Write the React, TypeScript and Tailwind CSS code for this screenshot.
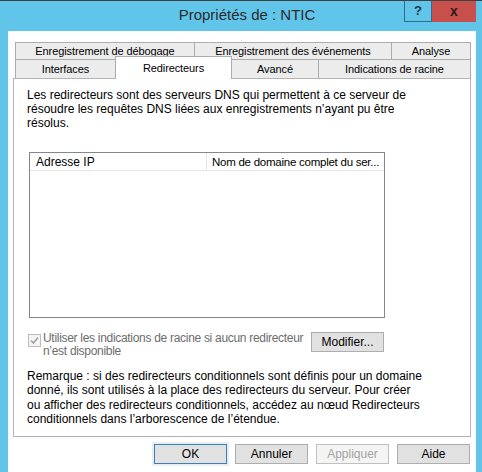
import React from 'react';

const topTabs = [
  { label: 'Enregistrement de débogage', w: 'w-[180px]' },
  { label: 'Enregistrement des événements', w: 'w-[198px]' },
  { label: 'Analyse', w: 'w-[80px]' },
];

function Button({ label, isDefault, disabled }: { label: string; isDefault?: boolean; disabled?: boolean }) {
  const look = disabled
    ? 'border-[#bfbfbf] bg-[#f4f4f4] text-[#a3a3a3]'
    : isDefault
      ? 'border-[#3c7fb1] bg-[#e1e1e1] text-black shadow-[0_0_0_2px_#e3eef6]'
      : 'border-[#adadad] bg-[#e1e1e1] text-black';
  return (
    <div className={`flex h-[20px] w-[73px] shrink-0 items-center justify-center border text-[12px] ${look}`}>
      {label}
    </div>
  );
}

export default function App() {
  return (
    <div className="flex h-[472px] w-[482px] flex-col overflow-hidden bg-[#60c5e8] font-['Liberation_Sans',Arial,sans-serif] text-black">
      {/* caption */}
      <div className="relative h-[31px] shrink-0 border-t border-[#3f3f3f]">
        <div className="flex h-full items-center justify-center pl-[12px] pb-[1px] text-[15px] text-[#2b2b2b]">
          Propriétés de : NTIC
        </div>
        <div className="absolute right-[6px] top-0 flex h-[21px]">
          <div className="flex w-[28px] items-center justify-center border-x border-b border-[#2e6d8e] text-[13px] font-bold text-[#1a3a4f]">
            ?
          </div>
          <div className="flex w-[44px] items-center justify-center bg-[#c7504c] text-[14px] font-bold text-[#2a1a1a]">
            x
          </div>
        </div>
      </div>

      {/* client area */}
      <div className="ml-[8px] mr-[6px] flex-1 bg-white px-[5px] pt-[11px]">
        <div className="whitespace-nowrap pl-[2px] text-[11px] tracking-[-0.1px]">
          <div className="flex h-[17px]">
            {topTabs.map((t, i) => (
              <div
                key={t.label}
                className={`${t.w} ${i > 0 ? '-ml-px' : ''} flex items-center justify-center border-x border-t border-[#acacac] bg-[#ececec]`}
              >
                {t.label}
              </div>
            ))}
          </div>
          <div className="flex h-[19px]">
            <div className="flex w-[101px] items-center justify-center border-x border-t border-[#acacac] bg-[#ececec]">
              Interfaces
            </div>
            <div className="relative z-10 -ml-px -mt-[3px] flex h-[23px] w-[117px] items-start justify-center border-x border-t border-[#acacac] bg-white pt-[3px]">
              Redirecteurs
            </div>
            <div className="-ml-px flex w-[88px] items-center justify-center border-x border-t border-[#acacac] bg-[#ececec]">
              Avancé
            </div>
            <div className="-ml-px flex w-[153px] items-center justify-center border-x border-t border-[#acacac] bg-[#ececec]">
              Indications de racine
            </div>
          </div>
        </div>

        {/* tab panel */}
        <div className="h-[359px] border border-[#b4b4b4] bg-white pl-[13px] pt-[9px] text-[12px] leading-[14px]">
          <p>
            Les redirecteurs sont des serveurs DNS qui permettent à ce serveur de
            <br />
            résoudre les requêtes DNS liées aux enregistrements n’ayant pu être
            <br />
            résolus.
          </p>

          <div className="ml-[2px] mt-[22px] h-[166px] w-[356px] border border-[#828790] bg-white">
            <div className="flex h-[18px] whitespace-nowrap border-b border-[#e5e5e5]">
              <div className="flex w-[177px] items-center border-r border-[#e5e5e5] pl-[6px]">Adresse IP</div>
              <div className="flex flex-1 items-center pl-[5px] text-[11.5px] tracking-[-0.25px]">Nom de domaine complet du ser...</div>
            </div>
          </div>

          <div className="mt-[14px] flex w-[357px] items-start">
            <div className="ml-[1px] mt-[2px] flex h-[13px] w-[13px] shrink-0 items-center justify-center border border-[#bcbcbc] bg-[#f4f4f4]">
              <svg width="9" height="9" viewBox="0 0 9 9">
                <path d="M1 4.5 L3.5 7 L8 1.5" fill="none" stroke="#a0a0a0" strokeWidth="1.6" />
              </svg>
            </div>
            <div className="ml-[2px] flex-1 whitespace-nowrap text-[12px] leading-[13px] tracking-[-0.3px] text-[#6d6d6d]">
              Utiliser les indications de racine si aucun redirecteur
              <br />
              n’est disponible
            </div>
            <Button label="Modifier..." />
          </div>

          <p className="mt-[11px] leading-[14.4px]">
            Remarque : si des redirecteurs conditionnels sont définis pour un domaine
            <br />
            donné, ils sont utilisés à la place des redirecteurs du serveur. Pour créer
            <br />
            ou afficher des redirecteurs conditionnels, accédez au nœud Redirecteurs
            <br />
            conditionnels dans l’arborescence de l’étendue.
          </p>
        </div>

        {/* dialog buttons */}
        <div className="mt-[7px] flex justify-end gap-[8px] pr-[1px]">
          <Button label="OK" isDefault />
          <Button label="Annuler" />
          <Button label="Appliquer" disabled />
          <Button label="Aide" />
        </div>
      </div>
    </div>
  );
}
